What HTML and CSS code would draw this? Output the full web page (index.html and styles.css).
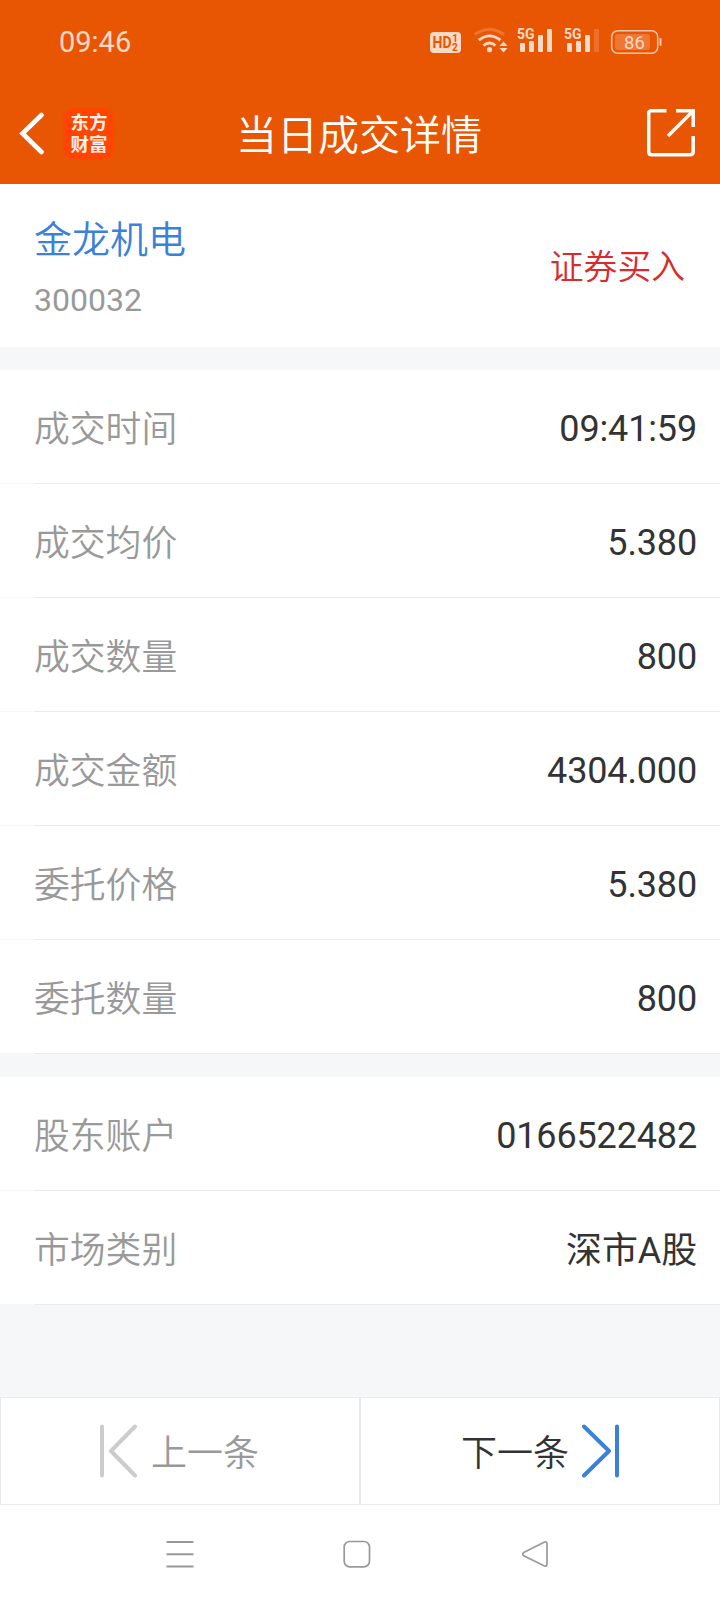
FILE: index.html
```html
<!DOCTYPE html>
<html lang="zh-CN">
<head>
<meta charset="utf-8">
<title>当日成交详情</title>
<link rel="stylesheet" href="styles.css">
</head>
<body>
<header class="top">
  <div class="status">
    <span class="clock">09:46</span>
    <svg class="status-icons" width="244" height="40" viewBox="424 22 244 40">
      <rect x="430" y="32" width="31" height="21" rx="4" fill="#fbd9c5"/>
      <g fill="#e95603" font-family="Roboto" font-weight="700">
        <text x="432.500" y="48.300" font-size="16.500" textLength="19" lengthAdjust="spacingAndGlyphs">HD</text>
        <text x="452.300" y="42" font-size="10">1</text>
        <text x="452" y="50.500" font-size="10">2</text>
      </g>
      <g fill="none" stroke-width="2.800" stroke="#fbd9c5">
        <path d="M474.800 34.500Q489.500 24.500 504.200 34.500" stroke="#ef7430"/>
        <path d="M478.800 40.200Q489.500 31.500 500.500 40.200"/>
        <path d="M483.500 45.500Q489.500 40.500 495.500 45.500"/>
      </g>
      <circle cx="489.500" cy="49.700" r="2.600" fill="#fbd9c5"/>
      <path d="M503.500 41.500L507.500 46H499.500zM499.500 48H507.500L503.500 52.500z" fill="#fbd9c5"/>
      <g fill="#fbd9c5">
        <text x="517" y="39.300" font-family="Roboto" font-weight="700" font-size="15.500" textLength="17.500" lengthAdjust="spacingAndGlyphs">5G</text>
        <rect x="520" y="43" width="5" height="9" rx="1"/><rect x="529" y="41" width="5" height="11" rx="1"/><rect x="538" y="35" width="5" height="17" rx="1"/><rect x="547" y="29" width="5" height="23" rx="1"/>
        <text x="564" y="39.300" font-family="Roboto" font-weight="700" font-size="15.500" textLength="17.500" lengthAdjust="spacingAndGlyphs">5G</text>
        <rect x="567" y="43" width="5" height="9" rx="1"/><rect x="576" y="41" width="5" height="11" rx="1"/><rect x="585" y="35" width="5" height="17" rx="1"/><rect x="594" y="29" width="5" height="23" rx="1" fill="#ed6f2b"/>
      </g>
      <rect x="611.700" y="30.700" width="46" height="22.600" rx="6" fill="none" stroke="#f9c7aa" stroke-width="1.500"/>
      <rect x="615" y="34" width="35" height="16" rx="3" fill="#ef7733"/>
      <rect x="659.500" y="38" width="2" height="8" rx="1" fill="#f9c7aa"/>
      <text x="624" y="49" font-family="Roboto" font-size="18.500" fill="#fbd9c5">86</text>
    </svg>
  </div>
  <div class="nav">
    <div class="nav-side">
      <svg width="26" height="44" viewBox="0 0 26 44"><path d="M22.500 3L3.500 21.500L22.500 40" fill="none" stroke="#fff" stroke-width="4.600" stroke-linecap="round" stroke-linejoin="miter"/></svg>
      <div class="logo"><span>东方</span><span>财富</span></div>
    </div>
    <h1 class="title">当日成交详情</h1>
    <div class="nav-side nav-end">
      <svg width="50" height="50" viewBox="0 0 50 50" fill="none" stroke="#fff" stroke-width="3.500"><path d="M19.500 1.700H4.500Q1.700 1.700 1.700 4.500V42.500Q1.700 45.700 4.500 45.700H43Q46.200 45.700 46.200 42.500V27M29 1.700H46.200V18M46 2L21 27"/></svg>
    </div>
  </div>
</header>
<main>
  <section class="stock">
    <div>
      <div class="name">金龙机电</div>
      <div class="code">300032</div>
    </div>
    <div class="side">证券买入</div>
  </section>
  <dl class="rows">
    <div class="row"><dt>成交时间</dt><dd>09:41:59</dd></div>
    <div class="row"><dt>成交均价</dt><dd>5.380</dd></div>
    <div class="row"><dt>成交数量</dt><dd>800</dd></div>
    <div class="row"><dt>成交金额</dt><dd>4304.000</dd></div>
    <div class="row"><dt>委托价格</dt><dd>5.380</dd></div>
    <div class="row"><dt>委托数量</dt><dd>800</dd></div>
  </dl>
  <dl class="rows">
    <div class="row"><dt>股东账户</dt><dd>0166522482</dd></div>
    <div class="row"><dt>市场类别</dt><dd class="cjk">深市A股</dd></div>
  </dl>
</main>
<div class="pager">
  <div class="page prev">
    <svg width="38" height="54" viewBox="0 0 38 54" fill="none" stroke="#ccc" stroke-width="4" stroke-linecap="round" stroke-linejoin="round"><path d="M3 2.500V51.500M36 2.500L12 27L36 51.500"/></svg>
    <span>上一条</span>
  </div>
  <div class="page next">
    <span>下一条</span>
    <svg width="38" height="54" viewBox="0 0 38 54" fill="none" stroke="#3a81d8" stroke-width="4" stroke-linecap="round" stroke-linejoin="round"><path d="M35 2.500V51.500M2 2.500L27 27L2 51.500"/></svg>
  </div>
</div>
<nav class="system">
  <svg width="28" height="28" viewBox="0 0 28 28" stroke="#999" stroke-width="2"><path d="M.5 2H27.500M.5 14.300H27.500M.5 26.500H27.500"/></svg>
  <svg width="28" height="28" viewBox="0 0 28 28" fill="none" stroke="#999" stroke-width="1.700"><rect x="1.200" y="1.500" width="25.300" height="25.300" rx="5.500"/></svg>
  <svg width="28" height="28" viewBox="0 0 28 28" fill="none" stroke="#999" stroke-width="1.700"><path d="M2.700 12.500L23.500 2Q26 1.500 26 4V24Q26 26.500 23.500 26L2.700 15.800Q.8 14.200 2.700 12.500Z"/></svg>
</nav>
</body>
</html>
```
FILE: styles.css
```css
* { box-sizing: border-box; margin: 0; padding: 0; }
body {
  width: 720px;
  height: 1604px;
  display: flex;
  flex-direction: column;
  background: #f6f7f9;
  color: #333;
  font-family: Roboto, "Noto Sans CJK SC", sans-serif;
  font-size: 36px;
  line-height: 48px;
}
svg { display: block; flex: none; }
.top { height: 184px; background: #e95603; color: #fff; }
.status {
  height: 84px;
  display: flex;
  justify-content: space-between;
  padding: 22px 52px 0 59px;
}
.clock { font-size: 29px; line-height: 40px; color: #fbd9c5; }
.nav {
  height: 100px;
  display: grid;
  grid-template-columns: 1fr auto 1fr;
  align-items: center;
  padding: 0 23px 0 19px;
}
.nav-side { display: flex; align-items: center; gap: 18px; }
.nav-end { justify-content: flex-end; }
.logo {
  width: 51px;
  height: 51px;
  margin-bottom: 2px;
  padding: 4px 0 0 1px;
  border-radius: 10px;
  background: #ff4500;
  display: flex;
  flex-direction: column;
  align-items: center;
  font-size: 18.500px;
  font-weight: 700;
  line-height: 22px;
  color: #fff1e8;
}
.title { padding: 4px 0 0 2px; font-size: 41px; font-weight: 350; line-height: 56px; }
.stock {
  height: 163px;
  padding: 32px 35px 0 34px;
  background: #fff;
  display: flex;
  justify-content: space-between;
}
.name { font-size: 38px; font-weight: 350; color: #3a81d8; }
.code { margin-top: 14px; font-size: 32px; line-height: 44px; color: #999; }
.side { padding-top: 28px; font-size: 33.800px; font-weight: 350; color: #d92b2b; }
.rows { margin-top: 23px; background: #fff; }
.row {
  height: 114px;
  padding: 4px 23px 1px 34px;
  display: flex;
  align-items: center;
  justify-content: space-between;
  background: linear-gradient(to right, #f8f8f8 34px, #ebebeb 34px) bottom / 100% 1px no-repeat;
}
.row dt { padding-top: 3px; font-size: 35.800px; font-weight: 350; color: #999; }
.row dd { letter-spacing: -0.150px; }
.row .cjk { padding-top: 3px; }
.pager { margin-top: 92px; display: flex; background: #fff; }
.page {
  width: 360px;
  height: 108px;
  display: flex;
  align-items: center;
  border: 1px solid #ebebeb;
}
.page span { padding-top: 6px; font-weight: 350; }
.prev { padding-left: 98px; gap: 14px; color: #999; }
.next { padding-left: 100px; gap: 13px; }
.system {
  flex: 1;
  display: flex;
  gap: 149.500px;
  padding: 35px 0 0 165.500px;
  background: #fff;
}
```
